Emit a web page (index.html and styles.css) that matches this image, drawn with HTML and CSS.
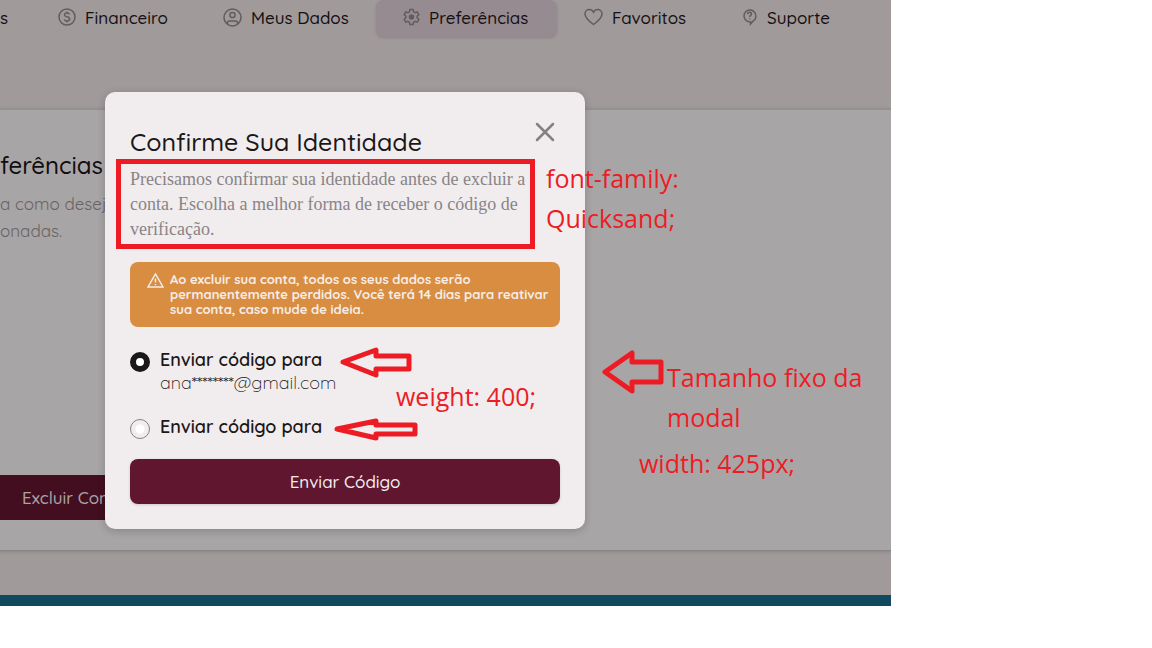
FILE: index.html
```html
<!DOCTYPE html>
<html lang="pt-BR">

<head>
  <meta charset="utf-8">
  <title>Preferências</title>
  <link rel="stylesheet" href="styles.css">
</head>

<body>
  <div class="screen">
    <nav class="menu">
      <a class="menu-item menu-item-cut" href="#">s</a>
      <a class="menu-item" href="#">
        <svg class="icon" width="18" height="18" viewBox="0 0 18 18">
          <circle cx="9" cy="9" r="8" />
          <path d="M11.500 6.400C11.200 5.300 10.200 5 9 5 7.600 5 6.500 5.600 6.500 6.900 6.500 9.600 11.600 8 11.600 11 11.600 12.300 10.400 13 9 13 7.600 13 6.600 12.400 6.400 11.300M9 3.500V5M9 13v1.500" />
        </svg>
        Financeiro
      </a>
      <a class="menu-item" href="#">
        <svg class="icon" width="19" height="19" viewBox="0 0 19 19">
          <circle cx="9.500" cy="9.500" r="8.500" />
          <circle cx="9.500" cy="7" r="2.600" />
          <path d="M4.500 16v-1.200c0-1 .8-1.800 1.800-1.800h6.400c1 0 1.800.8 1.800 1.800V16" />
        </svg>
        Meus Dados
      </a>
      <a class="menu-item active" href="#">
        <svg class="icon" width="17" height="18" viewBox="0 0 16 18">
          <path d="M6.400 1.500h3.200l.5 2.300 1.500.9 2.200-.8 1.500 2.700-1.700 1.600v1.600l1.700 1.600-1.500 2.700-2.200-.8-1.500.9-.5 2.300H6.400l-.5-2.300-1.500-.9-2.200.8L.7 11.400l1.700-1.600V8.200L.7 6.600l1.500-2.700 2.200.8 1.500-.9z" />
          <circle class="icon-core" cx="8" cy="9" r="2" />
        </svg>
        Preferências
      </a>
      <a class="menu-item" href="#">
        <svg class="icon" width="19" height="18" viewBox="0 0 19 18">
          <path d="M9.500 16.500C7 14.600 1 10.500 1 6 1 3.200 3 1.500 5.300 1.500c1.800 0 3.300 1 4.200 2.700.9-1.700 2.400-2.700 4.200-2.700C16 1.500 18 3.200 18 6c0 4.500-6 8.600-8.500 10.500z" />
        </svg>
        Favoritos
      </a>
      <a class="menu-item" href="#">
        <svg class="icon" width="16" height="18" viewBox="0 0 16 18">
          <path d="M8.500 16v-2A6 6 0 1 1 11 13.200zM5.700 6.200c0-1.200.8-1.900 1.900-1.900s1.900.7 1.900 1.700c0 1.300-1.800 1.500-1.800 3M7.700 10.400v1.200" />
        </svg>
        Suporte
      </a>
    </nav>

    <main class="panel">
      <h2>ferências</h2>
      <p>a como deseja<br>onadas.</p>
      <button class="btn btn-delete" type="button">Excluir Conta</button>
    </main>
    <footer class="footer"></footer>

    <div class="overlay">
      <form class="modal" role="dialog" aria-labelledby="modal-title">
        <header class="modal-header">
          <h1 id="modal-title">Confirme Sua Identidade</h1>
          <button class="close" type="button" aria-label="Fechar">
            <svg width="20" height="20" viewBox="0 0 20 20">
              <path d="M2 2l16 16M18 2L2 18" />
            </svg>
          </button>
        </header>
        <p class="description">Precisamos confirmar sua identidade antes de excluir a conta. Escolha a melhor forma de receber o código de verificação.</p>
        <div class="alert">
          <svg class="alert-icon" width="17" height="17" viewBox="0 0 17 17">
            <path d="M8.500 2L16 15H1zM8.500 6.500v4M8.500 12v1.200" />
          </svg>
          <p>Ao excluir sua conta, todos os seus dados serão<br>permanentemente perdidos. Você terá 14 dias para reativar<br>sua conta, caso mude de ideia.</p>
        </div>
        <div class="options">
          <label class="option">
            <input type="radio" name="destino" checked>
            <span>
              <strong>Enviar código para</strong>
              <span class="email">ana********@gmail.com</span>
            </span>
          </label>
          <label class="option">
            <input type="radio" name="destino">
            <strong>Enviar código para</strong>
          </label>
        </div>
        <button class="btn btn-send" type="submit">Enviar Código</button>
      </form>
    </div>

    <!-- anotações da revisão -->
    <div class="mark-box"></div>
    <svg class="arrows" width="891" height="606" viewBox="0 0 891 606">
      <path d="M343 362l33-12v6h33v13h-33v6z" />
      <path d="M337 429l39-8v4h39v9h-39v4z" />
      <path d="M605 372l27-19v9h29v20h-29v9z" />
    </svg>
    <p class="note note-font">font-family:<br>Quicksand;</p>
    <p class="note note-weight">weight: 400;</p>
    <p class="note note-size">Tamanho fixo da<br>modal</p>
    <p class="note note-width">width: 425px;</p>
  </div>
</body>

</html>
```
FILE: styles.css
```css
* {
  box-sizing: border-box;
}

body {
  margin: 0;
  background: #fff;
  font-family: Quicksand, Lato, sans-serif;
  font-weight: 500;
  color: #1c1719;
}

h1, h2, p {
  margin: 0;
  font-weight: 500;
}

.screen {
  position: relative;
  overflow: hidden;
  margin-right: 261px;
  background: #a09a9b;
}

/* menu */
.menu {
  display: grid;
  grid-template-columns: 31px 165px 180px 181px 158px 1fr;
  height: 108px;
  align-items: start;
}
.menu-item {
  display: flex;
  align-items: center;
  gap: 9px;
  height: 37px;
  padding: 0 27px 3px;
  color: #151012;
  font-size: 17px;
  text-decoration: none;
  white-space: nowrap;
}
.menu-item-cut {
  padding: 0 0 3px;
}
.menu-item.active {
  background: #968b90;
  border-radius: 8px;
  box-shadow: 0 1px 3px rgba(0, 0, 0, 0.15);
}
.icon {
  flex: none;
  fill: none;
  stroke: #625c5e;
  stroke-width: 1.5;
}
.icon-core {
  fill: #625c5e;
}

/* painel */
.panel {
  height: 443px;
  padding-top: 38px;
  background: #a8a5a6;
  border-top: 2px solid #959192;
  border-bottom: 1px solid #898586;
  box-shadow: 0 1px 3px rgba(0, 0, 0, 0.15);
}
.panel h2 {
  font-size: 24px;
  line-height: 34px;
  color: #110d0f;
}
.panel p {
  margin-top: 8px;
  font-size: 17px;
  font-weight: 400;
  line-height: 27px;
  color: #686365;
}
.footer {
  height: 11px;
  margin-top: 44px;
  background: #114a5e;
}

.btn {
  height: 45px;
  border: 0;
  font-family: inherit;
  font-size: 17px;
  font-weight: 500;
}
.btn-delete {
  display: block;
  width: 160px;
  margin-top: 231px;
  padding: 0 22px;
  text-align: left;
  background: #430f20;
  color: #aaa4a6;
}

/* modal */
.overlay {
  position: absolute;
  inset: 0;
  padding: 92px 0 0 105px;
}
.modal {
  width: 480px;
  padding: 25px;
  background: #f1edee;
  border-radius: 10px;
  box-shadow: 0 2px 8px rgba(0, 0, 0, 0.2);
}
.modal-header {
  display: flex;
  justify-content: space-between;
  align-items: flex-start;
  height: 50px;
  padding-right: 5px;
}
.modal-header h1 {
  padding-top: 9px;
  font-size: 25px;
  line-height: 32px;
}
.close {
  display: flex;
  margin-top: 5px;
  padding: 0;
  border: 0;
  background: none;
}
.close path {
  fill: none;
  stroke: #858082;
  stroke-width: 2.5;
  stroke-linecap: round;
}
.description {
  width: 400px;
  font-family: "Liberation Serif", serif;
  font-size: 18px;
  font-weight: 400;
  line-height: 25px;
  color: #898486;
}
.alert {
  display: flex;
  gap: 6px;
  margin-top: 20px;
  padding: 10px 0 10px 17px;
  border-radius: 8px;
  background: #d88d41;
  color: #f5edea;
}
.alert p {
  font-size: 13px;
  font-weight: 700;
  line-height: 15px;
}
.alert-icon {
  flex: none;
  fill: none;
  stroke: currentColor;
  stroke-width: 1.5;
}
.options {
  display: grid;
  gap: 21px;
  margin-top: 21px;
}
.option {
  display: flex;
  gap: 10px;
  line-height: 23px;
  font-size: 18px;
}
.option strong {
  display: block;
  font-weight: 600;
}
.option input {
  appearance: none;
  flex: none;
  width: 20px;
  height: 20px;
  margin: 4px 0 0;
  border: 1px solid #858183;
  border-radius: 50%;
  background: radial-gradient(circle, #fff 4px, #f1edee 5px);
}
.option input:checked {
  border: 6px solid #191718;
  background: #fff;
}
.email {
  font-weight: 300;
}
.btn-send {
  display: block;
  width: 100%;
  margin-top: 20px;
  border-radius: 8px;
  background: #60162e;
  color: #f1edee;
  box-shadow: 0 1px 3px rgba(0, 0, 0, 0.15);
}

/* anotações */
.mark-box {
  position: absolute;
  left: 116px;
  top: 159px;
  width: 419px;
  height: 90px;
  border: 5px solid #ed1c24;
}
.arrows {
  position: absolute;
  left: 0;
  top: 0;
  fill: none;
  stroke: #ed1c24;
  stroke-width: 5;
  stroke-linejoin: round;
}
.note {
  position: absolute;
  font-family: "Segoe UI", "Open Sans", sans-serif;
  font-size: 25px;
  font-weight: 400;
  line-height: 40px;
  color: #ed1c24;
  white-space: nowrap;
}
.note-font {
  left: 546px;
  top: 158px;
}
.note-weight {
  left: 396px;
  top: 376px;
}
.note-size {
  left: 667px;
  top: 357px;
}
.note-width {
  left: 639px;
  top: 443px;
}
```
